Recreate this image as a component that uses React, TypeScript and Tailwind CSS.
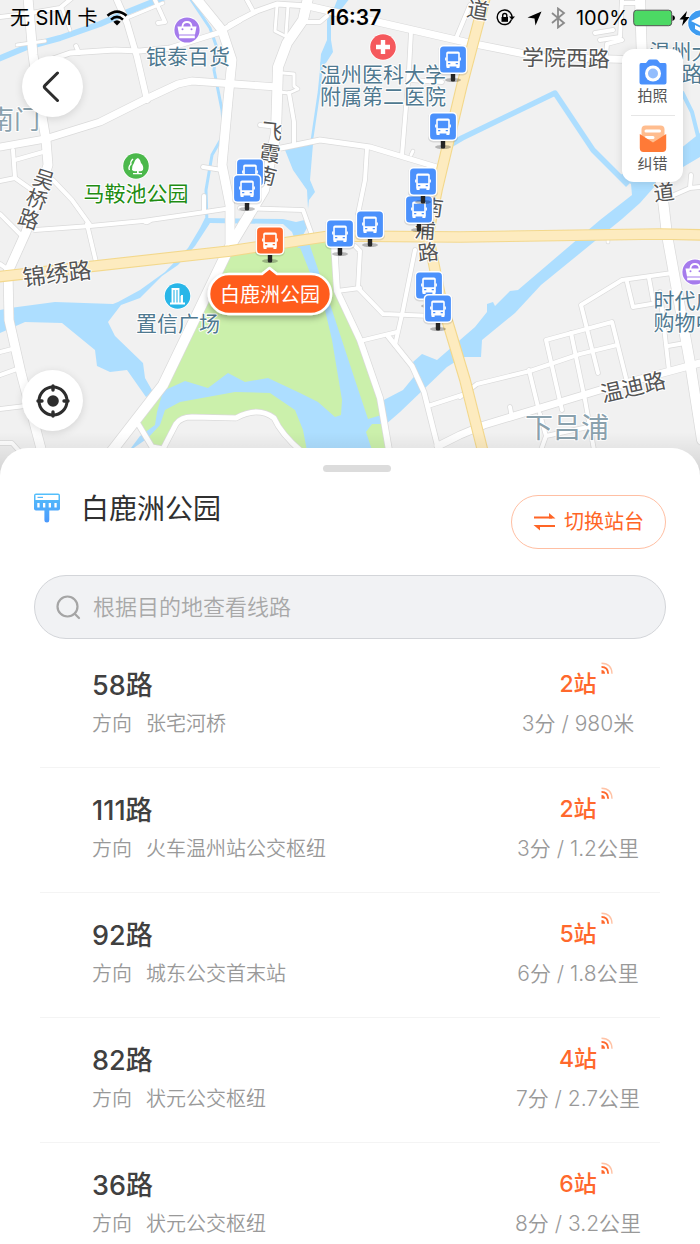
import React from "react";

const FONT = "font-['Inter','Noto_Sans_CJK_SC',sans-serif]";

type Road = { d: string; w: number };

const roads: Road[] = [
  { d: "M0 17 L25 14 L60 8 L72 -2", w: 4 },
  { d: "M17 45 L45 41", w: 3 },
  { d: "M62 8 L70 30", w: 3 },
  { d: "M155 0 L165 22 L158 23", w: 4 },
  { d: "M127 18 L163 3", w: 3 },
  { d: "M13 150 L15 178 L32 190", w: 4 },
  { d: "M0 181 L15 178", w: 4 },
  { d: "M15 160 L43 152", w: 4 },
  { d: "M53 180 L72 200 L90 225", w: 4 },
  { d: "M0 214 L22 236", w: 4 },
  { d: "M35 230 L90 226 L143 221 L205 212 L225 209", w: 4 },
  { d: "M143 221 q4 4 8 -1", w: 3 },
  { d: "M87 224 L96 262", w: 4 },
  { d: "M203 167 L222 170", w: 4 },
  { d: "M204 196 L204 212", w: 4 },
  { d: "M0 264 L10 271", w: 4 },
  { d: "M0 352 L12 349", w: 4 },
  { d: "M0 375 L17 369", w: 4 },
  { d: "M0 409 L25 406", w: 4 },
  { d: "M0 443 L12 443 L20 452", w: 4 },
  { d: "M76 46 L79 53", w: 4 },
  { d: "M117 0 L127 23 L137 57 L147 100", w: 6 },
  { d: "M50 60 L70 53 L115 50 L140 51 L170 48 L218 33 L240 20", w: 5 },
  { d: "M230 25 L257 11 L277 4 L308 6", w: 5 },
  { d: "M247 0 L253 11", w: 4 },
  { d: "M277 6 L275 31 L291 39", w: 3 },
  { d: "M288 6 L286 34", w: 3 },
  { d: "M303 22 L320 22 L327 16", w: 4 },
  { d: "M283 73 L294 74 L294 86 L298 89 L289 93 L279 92", w: 3 },
  { d: "M289 93 L294 122 L294 144", w: 4 },
  { d: "M260 125 L277 127", w: 4 },
  { d: "M281 148 L320 140 L370 147 L440 168", w: 5 },
  { d: "M367 148 L365 180 L358 214", w: 4 },
  { d: "M411 32 L409 70 L402 155", w: 4 },
  { d: "M410 80 L442 82", w: 4 },
  { d: "M411 155 L413 151", w: 3 },
  { d: "M240 208 L303 210 L313 238", w: 4 },
  { d: "M457 36 L470 5", w: 4 },
  { d: "M595 33 L613 30 M600 40 L620 37 L622 0 M606 55 L607 44 L622 40", w: 4 },
  { d: "M624 3 L640 3", w: 4 },
  { d: "M355 246 L360 251 L358 288 L383 314 L432 316", w: 4 },
  { d: "M337 291 L360 288", w: 4 },
  { d: "M415 250 L403 310 L395 345", w: 4 },
  { d: "M360 341 L397 332", w: 4 },
  { d: "M388 336 L412 366 L424 392 L438 448", w: 5 },
  { d: "M428 406 L465 394", w: 4 },
  { d: "M438 446 L460 435 L484 425 L600 390 L700 363", w: 7 },
  { d: "M460 397 L477 384 L530 371 L580 354 L617 345", w: 4 },
  { d: "M562 410 L546 340 L612 322 L626 378", w: 4 },
  { d: "M571 333 L585 400 L594 450", w: 4 },
  { d: "M598 373 L581 305 L622 280 L672 273", w: 4 },
  { d: "M627 282 L633 307 L657 303", w: 4 },
  { d: "M649 278 L653 300", w: 4 },
  { d: "M529 370 L539 411", w: 4 },
  { d: "M660 292 L669 371", w: 4 },
  { d: "M668 346 L685 343", w: 4 },
  { d: "M510 407 L512 418", w: 4 },
  { d: "M541 450 L546 436 L588 427", w: 4 },
  { d: "M540 414 L546 436", w: 4 },
  { d: "M674 195 L690 188 L691 175 M690 188 L700 187", w: 4 },
  { d: "M608 236 L608 242", w: 3 },
  { d: "M28 -2 L33 55 L40 105 L46 140 L48 165 L26 232 L8 272 L9 320 L21 373 L44 460", w: 9 },
  { d: "M0 147 L45 139 L100 122 L148 98 L178 84 L192 81 L277 87", w: 7 },
  { d: "M196 -2 L222 30 L232 60 L228 100 L222 165 L230 205 L230 245", w: 9 },
  { d: "M308 -2 L303 20 L287 43 L278 67 L276 133 L264 190 L228 250 L163 385 L108 456", w: 10 },
  { d: "M308 6 L465 42 L540 57 L645 60", w: 7 },
  { d: "M640 -2 L642 60 L655 130 L667 235 L690 363 L702 440", w: 10 },
  { d: "M334 243 L337 291 L360 340 L380 398 L390 456", w: 6 },
  { d: "M137 422 L152 447 L163 449 L176 424 Q181 417 192 417 L236 418 Q258 406 274 418 Q281 434 302 452", w: 5 },
];

const yellowRoads: Road[] = [
  { d: "M-4 277 L230 251 L330 236 L460 237 L660 234 L704 235", w: 10 },
  { d: "M486 -6 L462 85 L437 190 L428 235 L441 300 L465 380 L484 456", w: 10 },
];

type Label = {
  t: string;
  x: number;
  y: number;
  size?: number;
  r?: number;
  color?: string;
};

const BLUE = "#4f7990";
const PALE = "#8aa1ad";

const labels: Label[] = [
  { t: "南门", x: 14, y: 119, size: 26, color: PALE },
  { t: "银泰百货", x: 188, y: 56, color: BLUE },
  { t: "马鞍池公园", x: 136, y: 193, color: "#218c12" },
  { t: "吴", x: 44, y: 179, r: 18 },
  { t: "桥", x: 37, y: 199, r: 18 },
  { t: "路", x: 29, y: 219, r: 18 },
  { t: "飞", x: 272, y: 131, r: 6 },
  { t: "霞", x: 270, y: 153, r: 8 },
  { t: "南", x: 266, y: 175, r: 14 },
  { t: "温州医科大学", x: 383, y: 74, color: BLUE },
  { t: "附属第二医院", x: 383, y: 96, color: BLUE },
  { t: "道", x: 478, y: 10, r: 10, size: 22 },
  { t: "学院西路", x: 566, y: 58, size: 22, r: 1 },
  { t: "温州大", x: 681, y: 51, color: BLUE },
  { t: "路", x: 692, y: 73, color: BLUE },
  { t: "道", x: 664, y: 192, r: -7 },
  { t: "锦绣路", x: 57, y: 273, size: 23, r: -7 },
  { t: "置信广场", x: 178, y: 323, color: BLUE },
  { t: "南", x: 433, y: 207, r: 8 },
  { t: "浦", x: 425, y: 230, r: 4 },
  { t: "路", x: 428, y: 252, r: -6 },
  { t: "时代广", x: 685, y: 300, color: BLUE },
  { t: "购物中", x: 685, y: 322, color: BLUE },
  { t: "温迪路", x: 633, y: 387, size: 22, r: -13 },
  { t: "下吕浦", x: 567, y: 428, size: 28, color: PALE },
];

const stops: [number, number][] = [
  [250, 173],
  [247, 189],
  [453, 60],
  [443, 127],
  [419, 210],
  [423, 182],
  [370, 225],
  [340, 234],
  [429, 286],
  [438, 309],
];

function Pin({ x, y, fill }: { x: number; y: number; fill: string }) {
  return (
    <g transform={`translate(${x} ${y})`}>
      <ellipse cx="0" cy="20" rx="8" ry="2" fill="#000" opacity="0.25" />
      <rect x="-2.2" y="12" width="4.4" height="9.500" rx="1.5" fill="#262626" />
      <rect x="-15" y="-14.5" width="30" height="30" rx="5" fill="#000" opacity="0.1" />
      <rect x="-14.5" y="-15" width="29" height="29" rx="5" fill="#fff" />
      <rect x="-12.9" y="-13.4" width="25.8" height="25.8" rx="3.5" fill={fill} />
      <path
        fillRule="evenodd"
        fill="#fff"
        d="M-5 -8.500 H5 Q6.800 -8.500 6.800 -6.700 V6.500 H-6.800 V-6.700 Q-6.800 -8.500 -5 -8.500Z M-5.200 -6.300 V1.200 H5.200 V-6.300Z"
      />
      <path d="M-6.400 6 h3 v2 h-3z M3.400 6 h3 v2 h-3z M-7.900 -2.500 h1.400 v3 h-1.400z M6.500 -2.500 h1.400 v3 h-1.400z" fill="#fff" />
      <path d="M-4.900 3 h2.200 v1.300 h-2.200z M2.700 3 h2.200 v1.300 h-2.200z" fill={fill} />
    </g>
  );
}

function Bag({ x, y }: { x: number; y: number }) {
  return (
    <g transform={`translate(${x} ${y})`}>
      <circle r="13.6" fill="#fff" />
      <circle r="12.6" fill="#a57bec" />
      <path d="M-9.500 -3.500 H9.500 L8 4.500 H-8Z M-7.800 5.600 H7.800 V8.200 H-7.800Z" fill="#fff" />
      <path d="M-4.500 -2 V-4 Q-4 -8 0 -8 Q4 -8 4.500 -4 V-2" fill="none" stroke="#fff" strokeWidth="1.8" />
      <circle cx="-4.5" cy="-0.8" r="1" fill="#a57bec" />
      <circle cx="4.5" cy="-0.8" r="1" fill="#a57bec" />
    </g>
  );
}

function MapCanvas() {
  return (
    <svg
      className="block h-full w-full"
      viewBox="0 0 700 476"
      preserveAspectRatio="xMidYMid slice"
      role="img"
      aria-label="白鹿洲公园周边地图"
    >
      <defs>
        <linearGradient id="edge" x1="0" y1="0" x2="0" y2="1">
          <stop offset="0" stopColor="#000" stopOpacity="0" />
          <stop offset="1" stopColor="#000" stopOpacity="0.13" />
        </linearGradient>
        <filter id="soft" x="-20%" y="-40%" width="140%" height="200%">
          <feDropShadow dx="0" dy="3" stdDeviation="3" floodColor="#000" floodOpacity="0.3" />
        </filter>
      </defs>
      <rect width="700" height="476" fill="#f1f1f1" />

      <path d="M228 256 L240 252 L300 243 L334 240 L338 291 L360 342 L380 400 L388 456 L302 456 Q282 436 274 418 Q258 406 236 418 L192 417 Q181 417 176 424 L163 448 L152 445 L138 422 L165 386Z" fill="#cbf0ab" />

      <g fill="#addeff">
        <path d="M0 310 L10 308 L55 302 L113 304 L118 302 L140 290 L165 272 L188 248 L200 228 L205 218 L283 219 L296 222 L309 219 L307 228 L303 235 L308 248 L298 248 L292 232 L283 224 L210 223 L195 246 L178 265 L162 276 L140 298 L121 305 L108 322 L115 336 L143 363 L145 378 L153 392 L146 397 L127 370 L110 372 L97 366 L95 350 L62 323 L25 322 L0 333Z" />
        <path d="M163 391 L185 381 L208 388 L228 373 L245 382 L268 378 L300 393 L318 402 L335 417 L341 415 L342 400 L332 340 L325 310 L297 240 L308 240 L332 310 L355 380 L368 419 L385 414 L388 424 L372 424 L366 432 L374 456 L308 456 L303 430 L295 410 L270 393 L235 392 L180 402 L165 410 L160 425 L148 438 L128 452 L140 436 L155 425 L157 412Z" />
        <path d="M380 402 L403 390 L417 373 L413 362 L422 354 L437 360 L460 340 L475 327 L487 312 L487 304 L493 302 L495 306 L510 291 L518 290 L600 220 L632 195 L631 184 L618 176 L680 149 L700 133 L700 157 L683 167 L655 186 L640 203 L622 219 L541 285 L515 313 L482 340 L481 357 L463 357 L447 367 L400 412 L385 425Z" />
        <path d="M350 -2 L336 16 L331 20 L331 40 L333 52 L326 63 L320 66 L321 54 L327 40 L327 20 L334 8 L338 -2Z" />
        <path d="M285 150 L313 144 L310 180 L315 192 L309 200 L308 209 L307 190 L293 170Z" />
      </g>
      <g fill="none" stroke="#addeff" strokeLinejoin="round">
        <path d="M-2 59 L27 47 L45 42 L60 38 L100 24 L125 13 L165 -3" strokeWidth="6" />
        <path d="M190 -2 L210 28 L217 48 L214 70 L222 110 L224 134 L212 155 L206 190 L207 225" strokeWidth="3" />
        <path d="M322 62 L319 92 L311 146" strokeWidth="2.500" />
        <path d="M450 145 L462 138 L555 93 L593 150 L628 185" strokeWidth="5.5" />
        <path d="M682 92 L692 112 L698 136" strokeWidth="4" />
      </g>

      <g fill="none" strokeLinejoin="round" strokeLinecap="round">
        {roads.map((r) => (
          <path key={r.d} d={r.d} stroke="#dadada" strokeWidth={r.w + 1.4} />
        ))}
        {roads.map((r) => (
          <path key={r.d} d={r.d} stroke="#fff" strokeWidth={r.w} />
        ))}
        {yellowRoads.map((r) => (
          <path key={r.d} d={r.d} stroke="#f3d88c" strokeWidth={r.w + 1.6} />
        ))}
        {yellowRoads.map((r) => (
          <path key={r.d} d={r.d} stroke="#fdebbf" strokeWidth={r.w - 0.6} />
        ))}
      </g>

      <g
        className="font-['Noto_Sans_CJK_SC',sans-serif]"
        textAnchor="middle"
        stroke="#fff"
        strokeWidth="2"
        strokeLinejoin="round"
        paintOrder="stroke"
      >
        {labels.map((l) => {
          const size = l.size ?? 21;
          return (
            <text
              key={l.t + l.x}
              fontSize={size}
              fill={l.color ?? "#555"}
              transform={`translate(${l.x} ${l.y}) rotate(${l.r ?? 0})`}
              y={Math.round(size * 0.37)}
            >
              {l.t}
            </text>
          );
        })}
      </g>

      <Bag x={187} y={30} />
      <Bag x={695} y={272} />
      <g transform="translate(136 166)">
        <circle r="13.6" fill="#fff" />
        <circle r="12.8" fill="#4bb84b" />
        <path d="M2 -8 Q5 -6 5 -3 Q8 0 7 4 Q5 6 2.8 5 V7 H6 V8.2 H-3 V7 H1 V5 Q-2 6 -4 4 Q-4.500 0 -2 -3 Q-1 -7 2 -8Z" fill="#fff" />
        <path d="M-3 -7 Q-6 -4 -5 -2 Q-8 1 -6.500 4" fill="none" stroke="#fff" strokeWidth="1.4" />
      </g>
      <g transform="translate(383 47)">
        <circle r="13.6" fill="#fff" />
        <circle r="12.8" fill="#f5595d" />
        <path d="M-7 0 H7 M0 -7 V7" stroke="#fff" strokeWidth="4.4" />
      </g>
      <g transform="translate(177.500 296)">
        <circle r="13.6" fill="#fff" />
        <circle r="12.8" fill="#29b6e8" />
        <path d="M-7.500 7.500 H7.500 M-5 7 V-7 H1 V7 M-2 -6 V7 M4.500 7 V-1 M4 7 V0" stroke="#fff" strokeWidth="1.9" fill="none" />
      </g>
      <g transform="translate(701 23)">
        <circle r="13.6" fill="#fff" />
        <circle r="12.8" fill="#3d9bf0" />
        <path d="M-10 -2 L0 -7 L10 -2 L0 3Z M-6 2 L0 5 L6 2 V6 L0 9 L-6 6Z" fill="#fff" />
      </g>

      {stops.map(([x, y]) => (
        <Pin key={`${x}-${y}`} x={x} y={y} fill="#4b91fc" />
      ))}
      <Pin x={270} y={241} fill="#ff682c" />

      <g filter="url(#soft)">
        <path
          d="M229 274 H262 L269.500 268 L277 274 H311 A20 20 0 0 1 311 314 H229 A20 20 0 0 1 229 274Z"
          fill="#ff5c1c"
          stroke="#fff"
          strokeWidth="2.6"
          strokeLinejoin="round"
        />
      </g>
      <text
        x="270"
        y="302"
        textAnchor="middle"
        fontSize="20"
        fill="#fff"
        className="font-['Noto_Sans_CJK_SC',sans-serif]"
      >
        白鹿洲公园
      </text>
      <rect y="432" width="700" height="44" fill="url(#edge)" />
    </svg>
  );
}

function StatusBar() {
  return (
    <div className="absolute inset-x-0 top-0 grid h-9 grid-cols-[1fr_auto_1fr] items-center px-2.5 text-xl text-black">
      <div className="flex items-center gap-2">
        <span>无 SIM 卡</span>
        <svg width="22" height="16" viewBox="0 0 22 16" fill="none" stroke="#000" strokeWidth="2.6" aria-hidden="true">
          <path d="M1.500 5.800 Q11 -2.500 20.500 5.800" />
          <path d="M5 9.600 Q11 4.300 17 9.600" />
          <path d="M11 15.500 L7.300 11.800 Q11 8.800 14.700 11.800Z" fill="#000" stroke="none" />
        </svg>
      </div>
      <time className="pl-2 text-[21px] font-semibold">16:37</time>
      <div className="flex items-center justify-end">
        <svg width="19" height="18" viewBox="0 0 19 18" fill="none" stroke="#000" strokeWidth="1.4" aria-hidden="true">
          <path d="M14.500 4 A7.300 7.300 0 1 0 15.500 10.500" />
          <path d="M13 7.500 H19 L16 11Z" fill="#000" stroke="none" />
          <path d="M14.500 4 Q16 6 16 8" />
          <rect x="5.500" y="8" width="6.500" height="4.800" fill="#000" stroke="none" />
          <path d="M6.700 8 V6.500 a2 2 0 0 1 4.100 0 V8" />
        </svg>
        <svg className="ml-3" width="15" height="15" viewBox="0 0 15 15" aria-hidden="true">
          <path d="M14.500 0.500 L8.500 14.500 L7.500 7.500 L0.500 6.500Z" />
        </svg>
        <svg className="ml-2" width="16" height="22" viewBox="0 0 16 22" fill="none" stroke="#8b8b8b" strokeWidth="1.8" aria-hidden="true">
          <path d="M2 6 L14 16 L8 20.500 V1.500 L14 6 L2 16" />
        </svg>
        <span className="ml-2.5">100%</span>
        <svg className="ml-1" width="42" height="18" viewBox="0 0 42 18" aria-hidden="true">
          <rect x="0.700" y="1.200" width="38" height="15.500" rx="3" fill="#4cd964" stroke="#555" strokeWidth="1" />
          <path d="M39.500 6 Q42 7 42 9 Q42 11 39.500 12Z" fill="#000" />
        </svg>
        <svg className="ml-1" width="11" height="15" viewBox="0 0 11 15" aria-hidden="true">
          <path d="M8 0 L0.500 8.500 H4.500 L3 15 L10.500 6 H6.500Z" />
        </svg>
      </div>
    </div>
  );
}

function CameraIcon() {
  return (
    <svg width="28" height="26" viewBox="0 0 28 26" aria-hidden="true">
      <path d="M2 4 H7 L9 1.500 Q9.500 0.500 11 0.500 H17 Q18.500 0.500 19 1.500 L21 4 H26 Q27.500 4 27.500 6 V23.500 Q27.500 25.500 25.500 25.500 H2.500 Q0.500 25.500 0.500 23.500 V6 Q0.500 4 2 4Z" fill="#4b91fc" />
      <circle cx="14" cy="14.500" r="8" fill="#fff" />
      <circle cx="14" cy="14.500" r="5" fill="#93bdfd" />
    </svg>
  );
}

function MailIcon() {
  return (
    <svg width="28" height="28" viewBox="0 0 28 28" aria-hidden="true">
      <rect x="2.500" y="0.500" width="23" height="20" rx="4" fill="#ffbd8f" />
      <path d="M7 6 H20.500 M7 12.500 H14" stroke="#fff" strokeWidth="3" strokeLinecap="round" />
      <path d="M0.800 9 L14 17.500 L27.200 9 V23 Q27.200 27 23.500 27 H4.500 Q0.800 27 0.800 23Z" fill="#ff7a37" />
    </svg>
  );
}

const circleButton =
  "flex size-[61px] items-center justify-center rounded-full bg-white shadow-[0_2px_8px_rgba(0,0,0,0.12)]";

function MapSection() {
  return (
    <section className="relative h-[476px] shrink-0 overflow-hidden">
      <MapCanvas />
      <StatusBar />
      <button type="button" aria-label="返回" className={`absolute left-[22px] top-[56px] ${circleButton}`}>
        <svg className="mr-1" width="18" height="32" viewBox="0 0 18 32" fill="none" stroke="#2d2d2d" strokeWidth="3" strokeLinecap="round" strokeLinejoin="round" aria-hidden="true">
          <path d="M15.500 2 L2.800 14.600 Q1.800 15.800 2.800 17 L15.500 29.500" />
        </svg>
      </button>
      <button type="button" aria-label="定位" className={`absolute left-[22px] top-[370px] ${circleButton}`}>
        <svg width="34" height="34" viewBox="0 0 34 34" fill="none" stroke="#2d2d2d" strokeWidth="3" strokeLinecap="round" aria-hidden="true">
          <circle cx="17" cy="17" r="14" />
          <circle cx="17" cy="17" r="5.800" fill="#2d2d2d" stroke="none" />
          <path d="M17 2 V6 M17 28 V32 M2 17 H6 M28 17 H32" strokeWidth="3.400" />
        </svg>
      </button>
      <div className="absolute right-[17px] top-[49px] flex w-[61px] flex-col items-center rounded-xl bg-white text-[15px] leading-5 text-[#555] shadow-[0_1px_8px_rgba(0,0,0,0.12)]">
        <button type="button" className="flex h-[66px] w-full flex-col items-center gap-px pt-[10px]">
          <CameraIcon />
          拍照
        </button>
        <span className="h-px w-11 bg-[#e6e6e6]" />
        <button type="button" className="flex h-[66px] w-full flex-col items-center gap-px pt-[9px]">
          <MailIcon />
          纠错
        </button>
      </div>
    </section>
  );
}

function SignalIcon() {
  return (
    <svg width="12" height="12" viewBox="0 0 12 12" fill="none" aria-hidden="true">
      <path d="M0.500 8 Q4 8 4 11.800 H0.500Z" fill="#ff682c" />
      <path d="M0.500 4.900 Q7 5 7.200 11.800" stroke="#ff682c" strokeWidth="1.900" />
      <path d="M0.500 1.200 Q10.800 1.500 11 11.800" stroke="#ffc3a6" strokeWidth="1.400" />
    </svg>
  );
}

const lines = [
  { name: "58路", to: "张宅河桥", stops: "2站", eta: "3分 / 980米" },
  { name: "111路", to: "火车温州站公交枢纽", stops: "2站", eta: "3分 / 1.2公里" },
  { name: "92路", to: "城东公交首末站", stops: "5站", eta: "6分 / 1.8公里" },
  { name: "82路", to: "状元公交枢纽", stops: "4站", eta: "7分 / 2.7公里" },
  { name: "36路", to: "状元公交枢纽", stops: "6站", eta: "8分 / 3.2公里" },
];

function StationSheet() {
  return (
    <section className="relative -mt-7 flex min-h-0 flex-1 flex-col rounded-t-[28px] bg-white">
      <div className="mt-[17px] flex shrink-0 justify-center pl-3.5">
        <div className="h-[7px] w-[68px] rounded-full bg-[#dcdcdc]" />
      </div>
      <header className="mt-[23px] flex shrink-0 items-start justify-between px-[34px]">
        <div className="flex items-start gap-[21px]">
          <svg className="-mt-0.5" width="26" height="30" viewBox="0 0 26 30" aria-hidden="true">
            <defs>
              <linearGradient id="sign" x1="0" y1="0" x2="0" y2="1">
                <stop offset="0" stopColor="#54c0fb" />
                <stop offset="1" stopColor="#4a98fc" />
              </linearGradient>
            </defs>
            <path
              fillRule="evenodd"
              fill="url(#sign)"
              d="M2 0.500 H24 Q26 0.500 26 2.500 V15.500 Q26 17.500 24 17.500 H15.300 V27 Q15.300 29.500 13 29.500 Q10.400 29.500 10.400 27 V17.500 H2 Q0 17.500 0 15.500 V2.500 Q0 0.500 2 0.500Z M1.500 2 V7 H24.500 V2Z M3.300 10 V14.500 H5.600 V10Z M9 10 V14.500 H11.300 V10Z M14.700 10 V14.500 H17 V10Z M20.400 10 V14.500 H22.700 V10Z"
            />
            <path d="M3.500 4.400 H9" stroke="#54b8fb" strokeWidth="1.200" />
          </svg>
          <h1 className="text-[28px] leading-7 text-[#303030]">白鹿洲公园</h1>
        </div>
        <button
          type="button"
          className="flex h-[54px] w-[155px] items-center justify-center gap-2 rounded-full border border-[#ffbfa3] text-xl text-[#ff6526]"
        >
          <svg width="23" height="20" viewBox="0 0 23 20" fill="none" stroke="#ff6526" strokeWidth="2" aria-hidden="true">
            <path d="M1 5.500 H19 M22 14 H4" />
            <path d="M16 1 L22.500 6.500 H16Z M7 18.500 L0.500 13 H7Z" fill="#ff6526" stroke="none" />
          </svg>
          切换站台
        </button>
      </header>
      <label className="mx-[34px] mt-[26px] flex h-16 shrink-0 items-center gap-3 rounded-full border border-[#d3d5d9] bg-[#f1f2f4] pl-[21px] pr-5">
        <svg width="25" height="25" viewBox="0 0 25 25" fill="none" stroke="#a5a5a5" strokeWidth="2.200" strokeLinecap="round" aria-hidden="true">
          <circle cx="11.500" cy="11.500" r="10" />
          <path d="M18.700 18.700 L23 23" />
        </svg>
        <input
          type="search"
          aria-label="根据目的地查看线路"
          placeholder="根据目的地查看线路"
          className="min-w-0 flex-1 bg-transparent text-[22px] leading-8 font-[350] outline-none placeholder:text-[#a8a8a8] placeholder:opacity-100"
        />
      </label>
      <ul className="min-h-0 flex-1 overflow-y-auto px-10 pt-1 [scrollbar-width:none]">
        {lines.map((line) => (
          <li key={line.name} className="border-b border-[#f4f4f4]">
            <a href="#line" className="flex h-[124px] items-start justify-between pl-[52px] pt-[23px]">
              <span className="flex flex-col">
                <span className="text-[27px] leading-10 font-medium text-[#404040]">{line.name}</span>
                <span className="flex gap-[14px] text-xl leading-9 font-[350] text-[#999]">
                  <span>方向</span>
                  <span>{line.to}</span>
                </span>
              </span>
              <span className="flex w-[164px] flex-col items-center">
                <span className="relative text-[23px] leading-9 font-medium text-[#ff682c]">
                  {line.stops}
                  <span className="absolute -right-4 -top-1">
                    <SignalIcon />
                  </span>
                </span>
                <span className="mt-1 text-[21px] leading-9 font-[350] whitespace-nowrap text-[#999]">{line.eta}</span>
              </span>
            </a>
          </li>
        ))}
      </ul>
    </section>
  );
}

export default function App() {
  return (
    <main className={`flex h-screen flex-col overflow-hidden bg-white ${FONT}`}>
      <MapSection />
      <StationSheet />
    </main>
  );
}
